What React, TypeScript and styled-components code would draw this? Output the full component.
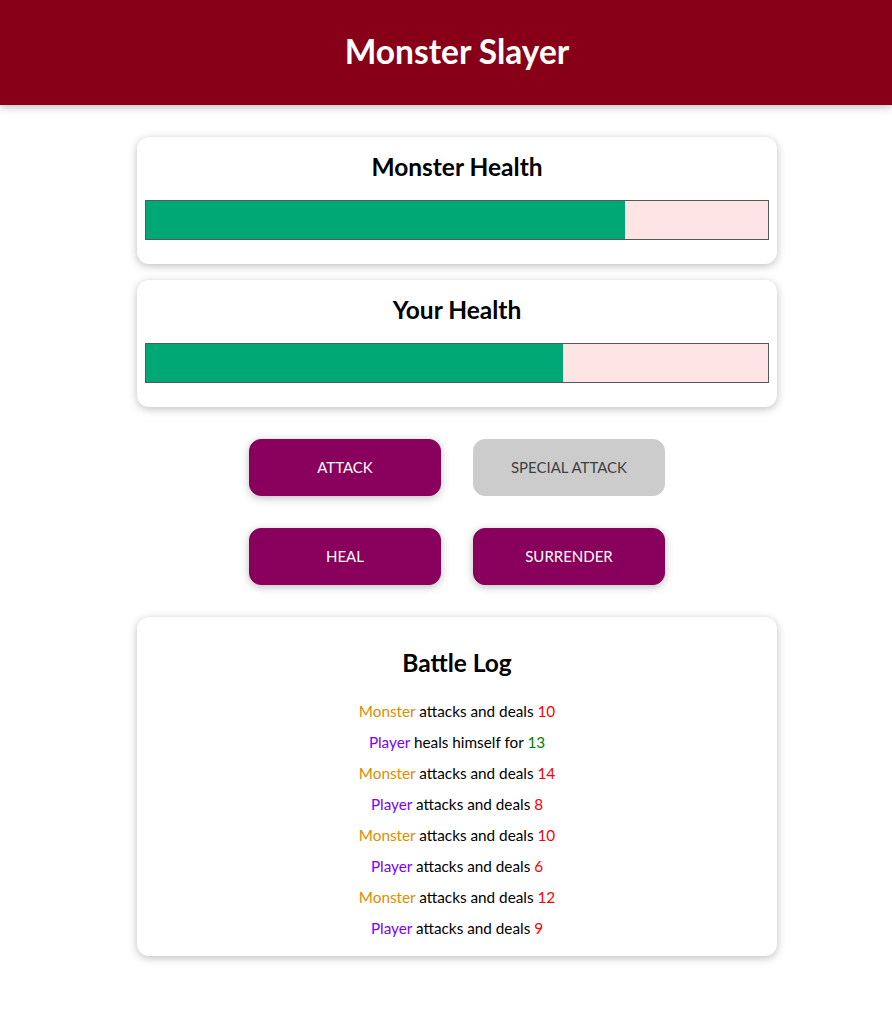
import React from "react";
import styled, { createGlobalStyle } from "styled-components";

const GlobalStyle = createGlobalStyle`
  * { box-sizing: border-box; }
  html { font-family: "Lato", "Noto Sans", sans-serif; }
  body { margin: 0; background: #ffffff; color: #000000; }
`;

const Header = styled.header`
  box-shadow: 0 2px 8px rgba(0, 0, 0, 0.26);
  padding: 0.5rem 0.5rem 0.5rem calc(0.5rem + 22px);
  background-color: #880017;
  color: white;
  text-align: center;
  margin-bottom: 2rem;
  height: 105px;
`;

const Title = styled.h1`
  font-size: 33.5px;
  font-weight: 700;
  margin: 20px 0;
  line-height: 46px;
`;

const Main = styled.main`
  padding-left: 22px;
`;

const Section = styled.section`
  width: 90%;
  max-width: 40rem;
  margin: 1rem auto;
  text-align: center;
  padding: 0.5rem;
  box-shadow: 0 2px 8px rgba(0, 0, 0, 0.26);
  border-radius: 12px;
  background: #fff;
`;

const CardTitle = styled.h2<{ $tight?: boolean }>`
  font-size: 24.5px;
  font-weight: 700;
  line-height: 35px;
  margin: ${(p) => (p.$tight ? "0.25rem" : "20px 0")};
`;

const HealthBar = styled.div`
  width: 100%;
  height: 40px;
  border: 1px solid #575757;
  margin: 1rem 0;
  background: #fde5e5;
`;

const HealthValue = styled.div`
  background-color: #00a876;
  height: 100%;
`;

const Controls = styled.section`
  width: 90%;
  max-width: 40rem;
  margin: 1rem auto;
  display: flex;
  flex-wrap: wrap;
  justify-content: center;
`;

const Button = styled.button`
  font: inherit;
  font-size: 15px;
  line-height: 22px;
  padding: 16px 2rem 17px;
  border: 1px solid #88005b;
  background-color: #88005b;
  color: white;
  border-radius: 12px;
  margin: 1rem;
  width: 12rem;
  cursor: pointer;
  box-shadow: 0 2px 8px rgba(0, 0, 0, 0.26);
  text-transform: uppercase;

  &:disabled {
    background-color: #ccc;
    border-color: #ccc;
    box-shadow: none;
    color: #3f3f3f;
    cursor: not-allowed;
  }
`;

const LogList = styled.ul`
  list-style: none;
  margin: 0;
  padding: 0;
`;

const LogItem = styled.li`
  margin: 0.5rem 0;
  font-size: 15.3px;
  line-height: 23px;
`;

const Actor = styled.span<{ $who: "player" | "monster" }>`
  color: ${(p) => (p.$who === "player" ? "#7700ff" : "#da8d00")};
`;

const Amount = styled.span<{ $kind: "damage" | "heal" }>`
  color: ${(p) => (p.$kind === "damage" ? "red" : "green")};
`;

type Entry = { who: "player" | "monster"; action: "attack" | "heal"; value: number };

const log: Entry[] = [
  { who: "monster", action: "attack", value: 10 },
  { who: "player", action: "heal", value: 13 },
  { who: "monster", action: "attack", value: 14 },
  { who: "player", action: "attack", value: 8 },
  { who: "monster", action: "attack", value: 10 },
  { who: "player", action: "attack", value: 6 },
  { who: "monster", action: "attack", value: 12 },
  { who: "player", action: "attack", value: 9 },
];

export default function App() {
  const monsterHealth = 77;
  const playerHealth = 67;
  return (
    <>
      <GlobalStyle />
      <Header>
        <Title>Monster Slayer</Title>
      </Header>
      <Main>
        <Section>
          <CardTitle $tight>Monster Health</CardTitle>
          <HealthBar>
            <HealthValue style={{ width: `${monsterHealth}%` }} />
          </HealthBar>
        </Section>
        <Section>
          <CardTitle $tight>Your Health</CardTitle>
          <HealthBar>
            <HealthValue style={{ width: `${playerHealth}%` }} />
          </HealthBar>
        </Section>
        <Controls>
          <Button>Attack</Button>
          <Button disabled>Special Attack</Button>
          <Button>Heal</Button>
          <Button>Surrender</Button>
        </Controls>
        <Section>
          <CardTitle>Battle Log</CardTitle>
          <LogList>
            {log.map((e, i) => (
              <LogItem key={i}>
                <Actor $who={e.who}>{e.who === "player" ? "Player" : "Monster"}</Actor>
                {e.action === "heal" ? " heals himself for " : " attacks and deals "}
                <Amount $kind={e.action === "heal" ? "heal" : "damage"}>{e.value}</Amount>
              </LogItem>
            ))}
          </LogList>
        </Section>
      </Main>
    </>
  );
}
